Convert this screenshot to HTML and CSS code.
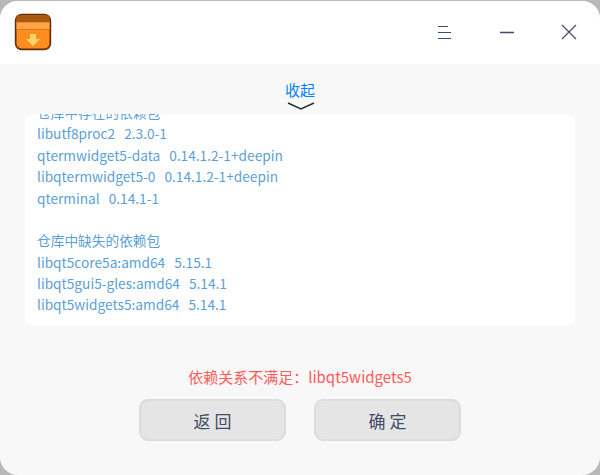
FILE: index.html
```html
<!DOCTYPE html>
<html lang="zh-CN">
<head>
  <meta charset="UTF-8">
  <title>软件包安装器</title>
  <link rel="stylesheet" href="styles.css">
</head>
<body>
<div class="window">
  <header class="titlebar">
    <svg class="app-icon" width="38" height="38" viewBox="0 0 38 38">
      <rect x="0.8" y="0.8" width="36.4" height="36.4" rx="7" fill="#5e2f08"/>
      <rect x="2.5" y="2.5" width="33" height="33" rx="5" fill="#ff8c1e"/>
      <rect x="2.5" y="2.5" width="33" height="7" fill="#a9590f"/>
      <rect x="2.5" y="9.5" width="33" height="6.5" fill="#ffa548"/>
      <rect x="2.5" y="16" width="33" height="1" fill="#e0741a"/>
      <path d="M16 21h6v5h4l-7 7-7-7h4z" fill="#ffd56a"/>
    </svg>
    <div class="win-btns">
      <svg class="win-btn" width="16" height="16" viewBox="0 0 16 16"><path d="M1 2.5h10M1 8.5h13M1 14.5h13" stroke="#414d68" stroke-width="1.2" fill="none"/></svg>
      <svg class="win-btn" width="16" height="16" viewBox="0 0 16 16"><path d="M1 8.5h14" stroke="#414d68" stroke-width="1.3" fill="none"/></svg>
      <svg class="win-btn" width="16" height="16" viewBox="0 0 16 16"><path d="M1 1l14 14M15 1L1 15" stroke="#414d68" stroke-width="1.2" fill="none"/></svg>
    </div>
  </header>
  <main class="content">
    <button class="toggle">收起</button>
    <svg class="chevron" width="28" height="8" viewBox="0 0 28 8"><path d="M1 1l13 6 13-6" stroke="#2c2c2c" stroke-width="1.4" fill="none"/></svg>
    <div class="dep-box">
      <div class="dep-list">
        <p>仓库中存在的依赖包</p>
        <p>libutf8proc2<span class="ver">2.3.0-1</span></p>
        <p>qtermwidget5-data<span class="ver">0.14.1.2-1+deepin</span></p>
        <p>libqtermwidget5-0<span class="ver">0.14.1.2-1+deepin</span></p>
        <p>qterminal<span class="ver">0.14.1-1</span></p>
        <p>&nbsp;</p>
        <p>仓库中缺失的依赖包</p>
        <p>libqt5core5a:amd64<span class="ver">5.15.1</span></p>
        <p>libqt5gui5-gles:amd64<span class="ver">5.14.1</span></p>
        <p>libqt5widgets5:amd64<span class="ver">5.14.1</span></p>
      </div>
    </div>
    <div class="error">依赖关系不满足：libqt5widgets5</div>
    <div class="actions">
      <button class="btn">返 回</button>
      <button class="btn">确 定</button>
    </div>
  </main>
</div>
</body>
</html>
```
FILE: styles.css
```css
html, body {
  margin: 0;
  padding: 0;
  height: 100%;
}

body {
  background: #b9b9b9;
  font-family: "Noto Sans CJK SC", "Noto Sans", sans-serif;
  overflow: hidden;
}

.window {
  box-sizing: border-box;
  height: 474px;
  margin-top: 1px;
  background: #f8f8f8;
  border-radius: 18px;
  overflow: hidden;
}

.titlebar {
  height: 63px;
  background: #fff;
  display: flex;
  align-items: center;
  justify-content: space-between;
  padding: 0 23px 0 13.5px;
}

.app-icon {
  display: block;
  margin-top: -1px;
}

.win-btns {
  display: flex;
  gap: 46px;
  margin-top: -1px;
}

.content {
  display: flex;
  flex-direction: column;
  align-items: center;
}

.toggle {
  background: none;
  border: none;
  padding: 0;
  margin-top: 14px;
  height: 22px;
  line-height: 22px;
  font: inherit;
  font-size: 15px;
  color: #0081ff;
}

.chevron {
  display: block;
  margin: 2px 0 0 2px;
}

.dep-box {
  box-sizing: border-box;
  width: 550px;
  height: 212px;
  margin-top: 4px;
  padding: 0 12px;
  background: #fff;
  border-radius: 10px;
  overflow: hidden;
  align-self: center;
}

.dep-list {
  margin-top: -12px;
  color: #5b9fd6;
  font-size: 13.7px;
}

.dep-list p {
  margin: 0;
  height: 21.38px;
  line-height: 21.38px;
  white-space: pre;
}

.ver {
  margin-left: 9px;
}

.error {
  margin-top: 40px;
  height: 22px;
  line-height: 22px;
  font-size: 15px;
  color: #ff5a5a;
}

.actions {
  display: flex;
  gap: 28px;
  margin-top: 11px;
}

.btn {
  width: 147px;
  height: 42px;
  box-sizing: border-box;
  background: #e5e5e5;
  border: 2px solid #dcdcdc;
  border-radius: 9px;
  font: inherit;
  font-size: 17px;
  color: #414d68;
}
```
